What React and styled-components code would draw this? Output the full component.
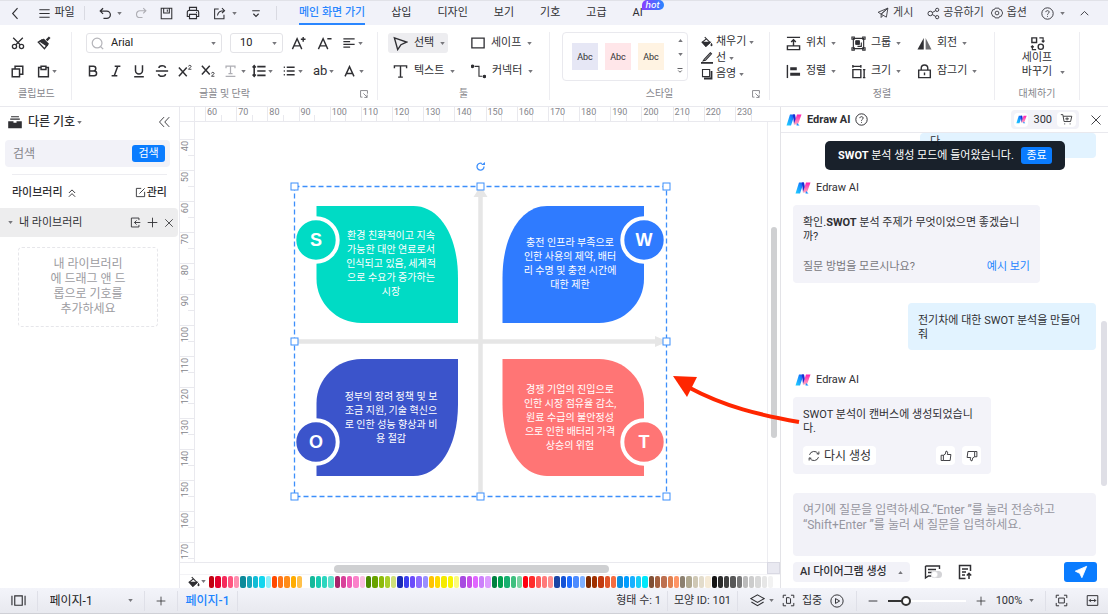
import { useState } from "react";
import styled, { createGlobalStyle, css } from "styled-components";

const GlobalStyle = createGlobalStyle`
  * {
    box-sizing: border-box;
  }

  body {
    margin: 0;
    background: #fff;
    color: #2f2f33;
    font-family: Roboto, "Noto Sans CJK KR", sans-serif;
    font-size: 11px;
    line-height: 14px;
    overflow: hidden;
  }

  button, input, select, textarea {
    font: inherit;
    color: inherit;
    margin: 0;
    padding: 0;
    border: 0;
    background: none;
  }

  button {
    cursor: pointer;
  }

  a {
    text-decoration: none;
  }

  svg {
    display: block;
    flex: none;
  }
`;

/* ---------- icons ---------- */

const icons = {
  back: <path d="M10.5 1.5 4.500 8l6 6.500" />,
  menu: <path d="M.500 2.500h15M.500 8h15M.500 13.500h15" />,
  undo: <path d="M5 1.500 1.500 5l3.500 3.500M1.500 5h8a4.500 4.500 0 0 1 0 9H5.500" />,
  redo: <path d="M11 1.500l3.500 3.500-3.500 3.500M14.500 5h-8a4.500 4.500 0 0 0 0 9H10" />,
  save: <path d="M1.500 1.500h13v13h-13zM4.500 1.500v6h7v-6M9 3.200v2.500" />,
  print: (
    <>
      <path d="M4 5V1.500h8V5M4 12H1.500V7a2 2 0 0 1 2-2h9a2 2 0 0 1 2 2v5H12" />
      <path d="M4 9.500h8v5H4zM11.500 7.300h1" />
    </>
  ),
  export: <path d="M7 2.500H2v12h11.500V9.500M5.500 10.500C6 6.500 9 4.500 13.500 4.500M11 1.500l3.200 3L11 7.500" />,
  more: <path d="M3 5h10M4.500 9 8 12.500 11.500 9" />,
  plane: <path d="M14.500 1.500 1.500 7l4 2.500zM14.500 1.500l-2 12-7-4zM5.500 9.500V14l2.500-2.800" />,
  share: (
    <>
      <circle cx="4" cy="8" r="2.800" />
      <circle cx="12.500" cy="3.500" r="2" />
      <circle cx="12.500" cy="12.500" r="2" />
      <path d="m6.500 6.800 4.200-2.300M6.500 9.300l4.200 2.300" />
    </>
  ),
  gear: (
    <>
      <path d="M5.500 1.500h5l1 2 2.200.2L15.500 8l-1.800 4.300-2.200.2-1 2h-5l-1-2-2.200-.2L.500 8l1.800-4.300 2.200-.2z" />
      <circle cx="8" cy="8" r="2.500" />
    </>
  ),
  help: (
    <>
      <circle cx="8" cy="8" r="7" />
      <path d="M6 6.300C6 3.800 10 3.900 10 6.300 10 7.800 8 7.800 8 9.500M8 11v1" />
    </>
  ),
  up: <path d="m2.500 10.500 5.500-5.500 5.500 5.500" />,
  cut: (
    <>
      <circle cx="4" cy="12" r="2.400" />
      <circle cx="12" cy="12" r="2.400" />
      <path d="M2.500 2 10.500 10M13.500 2l-8 8" />
    </>
  ),
  brush: (
    <>
      <path d="M14.500 1.500 11 5" strokeWidth="2.600" />
      <path d="m7 3.500 6 6" strokeWidth="2" />
      <path d="M6 4.500 1.500 7l7 7.500 3.500-4.500z" />
      <path d="m6 4.500 6 5.500-1 1-7.500-5z" fill="currentColor" />
    </>
  ),
  copy: <path d="M1.500 5h9v9.500h-9zM5 4.500v-3h9.500v10H11" />,
  paste: <path d="M5 3H2v11.500h12V3h-3M5 1.500h6v4H5z" />,
  search: (
    <>
      <circle cx="7.500" cy="7.500" r="6" />
      <path d="m12 12 3 3" />
    </>
  ),
  fontUp: <path d="M1.500 14 6.500 3l5 11M3.500 10.500h6M13 1v5M10.500 3.500h5" />,
  fontDown: <path d="M1.500 14 6.500 3l5 11M3.500 10.500h6M11 3h4.500" />,
  align: <path d="M.500 2.500h15M.500 6.200h9M.500 9.800h15M.500 13.500h9" />,
  bold: <path d="M4 2.500h4.500a2.700 2.700 0 0 1 0 5.400H4zM4 7.900h5.300a2.800 2.800 0 0 1 0 5.600H4z" />,
  italic: <path d="M6.500 2.500H13M3 13.500h6.500M10 2.500l-4 11" />,
  underline: <path d="M4 1.500v6a4 4 0 0 0 8 0v-6M2.500 14.500h11" />,
  strike: <path d="M12 4.500C11.500 1.300 4.500 1.300 4.500 4.700M1 8h14M4 11.500c.5 3.400 8 3.300 8-.2" />,
  sup: (
    <>
      <path d="m1 4 9 10M10 4 1 14" />
      <path d="M12 2.800c0-1.700 3-1.700 3 0 0 1-3 2.200-3 3.200h3.300" strokeWidth="1" />
    </>
  ),
  sub: (
    <>
      <path d="m1 2 9 10M10 2 1 12" />
      <path d="M12 10.800c0-1.700 3-1.700 3 0 0 1-3 2.200-3 3.200h3.300" strokeWidth="1" />
    </>
  ),
  textFx: <path d="M2.500 4V1.500h11V4M8 1.500v9M5.500 10.500h5M2 14h12" />,
  lineHeight: <path d="M6 3h9.500M6 8h9.500M6 13h9.500M2.500 2v12M.700 4l1.800-2 1.800 2M.700 12l1.800 2 1.800-2" />,
  list: <path d="M5 3h10.500M5 8h10.500M5 13h10.500M1 3h1.500M1 8h1.500M1 13h1.500" />,
  fontColor: <path d="M2.500 14 8 2l5.500 12M4.300 10.500h7.400" />,
  launcher: <path d="M5.500 13H2.500V2.500h11v5M7 7l6 6M13 9v4.500H8.500" />,
  cursor: <path d="M1.500 2 14.500 6.500 8.500 9.300 5 14.500z" />,
  rect: <path d="M1 2.500h14v11H1z" />,
  text: <path d="M1.500 4.500V2h13v2.500M8 2v12M5.500 14h5" />,
  connector: (
    <>
      <path d="M4 2.500h4.500v10.500H12" strokeWidth="1.200" />
      <circle cx="1.700" cy="2.500" r="1.200" fill="currentColor" />
      <circle cx="14.300" cy="13.300" r="1.200" fill="currentColor" />
    </>
  ),
  fill: (
    <>
      <path d="M5 1.500 12 8.500 6.500 13.500 1.500 8.500 7.500 3.500" />
      <path d="M2.500 8.500H12l-5.500 5z" fill="currentColor" />
      <path d="M14 10.500c-2 3 2 3 0 0z" fill="currentColor" />
    </>
  ),
  pen: (
    <>
      <path d="M4.500 9.500 12.500 1l1.500 1.500-8 8.500-3 .8z" />
      <path d="M0 14.500h16" strokeWidth="2.400" />
    </>
  ),
  shadow: (
    <>
      <path d="M2 2h9.500v9.500H2z" />
      <path d="M4 14h10V4" strokeWidth="2.400" />
    </>
  ),
  position: <path d="M1 1.500h14M8 10V4.500M5.500 6.500 8 4l2.500 2.500M1.500 10.500h13v4h-13z" />,
  group: (
    <>
      <path d="M2.500 2.500h11v11h-11z" strokeWidth="1.200" />
      <path d="M1 1h2.500v2.500H1zM12.500 1H15v2.500h-2.500zM1 12.500h2.500V15H1zM12.500 12.500H15V15h-2.500z" strokeWidth="1.200" />
      <path d="M5 5h4v4H5z" fill="currentColor" strokeWidth="1" />
      <path d="M10.500 7.500H11v3.500H7.500v-.5" strokeWidth="1.200" />
    </>
  ),
  flip: (
    <>
      <path d="M7.200 2v12.500H.500z" fill="currentColor" />
      <path d="M9.200 2v12.500H15.500z" opacity=".7" fill="currentColor" />
    </>
  ),
  alignLeft: (
    <>
      <path d="M1.500 1v14" />
      <path d="M4.500 5h7M4.500 11h10.500" strokeWidth="3.200" />
    </>
  ),
  size: <path d="M2 6h8.500v8.500H2zM2 2.500h8.500M2 1v3M10.500 1v3M14 6v8.500M12.700 6h2.600M12.700 14.500h2.600" />,
  lock: <path d="M1.800 6.500h12.400v8H1.800zM4.500 6.500v-2a3.500 3.500 0 0 1 7 0v2M8 9v3" />,
  replace: (
    <>
      <path d="M2 2h5v5H2z" />
      <circle cx="11.500" cy="11.500" r="2.800" />
      <path d="M10 2h4v4M12.500 5 14 6.500 15.500 5M6.500 14.500h-4v-4M1 12l1.500-1.500L4 12" strokeWidth="1.200" />
    </>
  ),
  drawer: (
    <>
      <path d="M3.500 2h9M2.500 4.700h11" strokeWidth="1.200" />
      <path d="M1 8h4.500v1.500h5V8H15v6.500H1z" fill="currentColor" />
    </>
  ),
  collapse: <path d="M8 1.500 2 8l6 6.500M15 1.500 9 8l6 6.500" />,
  doubleUp: <path d="M3 8l5-5 5 5M3 14l5-5 5 5" />,
  edit: <path d="M9 2H2v12h12V7M6.500 9.500 14 2" />,
  importBox: <path d="M13 4.500v-3H2v13h11v-3M15 8H6.500M9.500 5l-3 3 3 3" />,
  plus: <path d="M8 1v14M1 8h14" />,
  minus: <path d="M1 8h14" />,
  close: <path d="m2 2 12 12M14 2 2 14" />,
  cart: (
    <>
      <path d="M1 2h2.500l1.500 8.500h8L14.500 4H4M6.500 7.200h4.500M8.700 5.300v3.800" />
      <path d="M5.500 13.500h.800M12 13.500h.800" strokeWidth="1.600" />
    </>
  ),
  refresh: <path d="M2 6.500A6.300 6.300 0 0 1 13.500 5M14 9.500A6.300 6.300 0 0 1 2.500 11M1.500 14v-3.500l3 .5M14.500 2v3.500l-3-.5" />,
  thumb: <path d="M1.500 7h3v7h-3zM4.500 7 7 5.500 8 1.500c2.500 0 2.500 2 1.800 4.500h4.700l-1 8h-9" />,
  thumbDown: <path d="M14.500 9h-3V2h3zM11.500 9 9 10.500 8 14.500c-2.500 0-2.500-2-1.800-4.500H1.500l1-8h9" />,
  docUp: <path d="M13.500 7V1.500h-11v13h6M5 5h6M5 8h4M5 11h3M12 15V9.500M9.800 11.500 12 9.300l2.200 2.200" />,
  send: <path d="M14.500 1.500 1.500 7l5 2.500 2.500 5z" fill="currentColor" />,
  pages: <path d="M4 3h8v10H4zM1 3v10M15 3v10" />,
  layers: <path d="M8 2 15 6 8 10 1 6zM1.500 9.500 8 13.500l6.500-4" />,
  focus: <path d="M1.500 5V1.500H5M11 1.500h3.500V5M14.500 11v3.500H11M5 14.500H1.500V11M5.500 4.500h3.500l1.500 1.500v5.500h-5z" />,
  play: (
    <>
      <circle cx="8" cy="8" r="7" />
      <path d="M6.300 5.200v5.600L11 8z" />
    </>
  ),
  fit: <path d="M1.500 5V1.500H5M11 1.500h3.500V5M14.500 11v3.500H11M5 14.500H1.500V11M4.500 5h7v6h-7z" />,
  fitWidth: <path d="M1.500 2h13v12h-13zM4 8h8M6 6 4 8l2 2M10 6l2 2-2 2" />,
};

const Icon = ({ name, size = 14, stroke = 1.5 }) => (
  <svg
    width={size}
    height={size}
    viewBox="0 0 16 16"
    fill="none"
    stroke="currentColor"
    strokeWidth={stroke}
    aria-hidden="true"
  >
    {icons[name]}
  </svg>
);

const CaretSvg = styled.svg`
  color: #77777c;
`;

const Caret = ({ up }) => (
  <CaretSvg width="5" height="3" viewBox="0 0 6 4">
    <path d={up ? "M0 4h6L3 0z" : "M0 0h6L3 4z"} fill="currentColor" />
  </CaretSvg>
);

const Logo = ({ size = 16 }) => (
  <svg width={size} height={size} viewBox="0 0 16 16">
    <defs>
      <linearGradient id="logoBlue" x1="0" y1="1" x2="1" y2="0">
        <stop offset="0" stopColor="#24d3ff" />
        <stop offset=".6" stopColor="#1590ff" />
        <stop offset="1" stopColor="#1a3be8" />
      </linearGradient>
      <linearGradient id="logoPink" x1="0" y1="0" x2="0" y2="1">
        <stop offset="0" stopColor="#ff1fae" />
        <stop offset="1" stopColor="#ffa9c0" />
      </linearGradient>
    </defs>
    <path d="M4 2.500h4.800L5 13.500H.500z" fill="url(#logoBlue)" />
    <path d="M7 2.500h2L10.500 10 8 12.500z" fill="#1a2bd0" />
    <path d="M11 2.500h4.500L12 12.500H7.800z" fill="url(#logoPink)" />
    <path d="m11 11 2.500 2.500h-3z" fill="#1590ff" />
  </svg>
);

/* ---------- frame ---------- */

const Page = styled.div`
  display: flex;
  flex-direction: column;
  height: 100vh;
`;

const Row = styled.div`
  display: flex;
  align-items: center;
  gap: ${(p) => p.$gap || 0}px;
`;

const ToolButton = styled.button`
  display: inline-flex;
  align-items: center;
  justify-content: ${(p) => (p.$center ? "center" : "flex-start")};
  gap: ${(p) => p.$gap || 0}px;
  height: ${(p) => p.$height || 20}px;
  ${(p) => p.$width && css`width: ${p.$width}px;`}
  color: ${(p) => (p.$muted ? "#aeaeb4" : "inherit")};
  white-space: nowrap;
`;

const VLine = styled.i`
  width: 1px;
  height: 14px;
  background: #d9dae2;
`;

/* ---------- top bar ---------- */

const TopBar = styled.header`
  display: flex;
  align-items: center;
  height: 25px;
  background: #f1f2f9;
  border-top: 1px solid #e1e2e8;
`;

const Quick = styled(Row)`
  padding: 0 14px;
  gap: 13px;
`;

const Tabs = styled.nav`
  display: flex;
  gap: 26px;
  margin-left: 22px;
  height: 24px;
`;

const Tab = styled.a`
  position: relative;
  color: ${(p) => (p.$active ? "#2a86ff" : "#2f2f33")};
  font-weight: ${(p) => (p.$active ? 500 : 400)};
  line-height: 23px;
  height: 24px;
  border-bottom: 2px solid ${(p) => (p.$active ? "#2a86ff" : "transparent")};
`;

const HotBadge = styled.span`
  position: absolute;
  left: 9px;
  top: -1px;
  padding: 0 4px;
  border-radius: 5px 5px 5px 0;
  background: linear-gradient(90deg, #8a3dff, #2a86ff);
  color: #fff;
  font: italic 500 9px/10px Inter, sans-serif;
`;

const TopRight = styled(Row)`
  margin-left: auto;
  padding-right: 18px;
  gap: 14px;
  color: #3c3c42;
`;

const TopBarView = () => (
  <TopBar>
    <ToolButton $center $width={30} aria-label="뒤로">
      <Icon name="back" size={13} stroke={1.4} />
    </ToolButton>
    <ToolButton $center $gap={4} $width={54}>
      <Icon name="menu" size={11} /> 파일
    </ToolButton>
    <VLine />
    <Quick>
      <ToolButton aria-label="실행 취소" $gap={5}>
        <Icon name="undo" size={13} />
        <Caret />
      </ToolButton>
      <ToolButton $muted aria-label="다시 실행"><Icon name="redo" size={12} /></ToolButton>
      <ToolButton aria-label="저장"><Icon name="save" size={13} stroke={1.3} /></ToolButton>
      <ToolButton aria-label="인쇄"><Icon name="print" size={14} stroke={1.3} /></ToolButton>
      <ToolButton aria-label="내보내기" $gap={6}>
        <Icon name="export" size={13} stroke={1.3} />
        <Caret />
      </ToolButton>
      <ToolButton aria-label="더 보기"><Icon name="more" size={12} /></ToolButton>
    </Quick>
    <VLine />
    <Tabs>
      <Tab href="#home" $active>메인 화면 가기</Tab>
      <Tab href="#insert">삽입</Tab>
      <Tab href="#design">디자인</Tab>
      <Tab href="#view">보기</Tab>
      <Tab href="#symbol">기호</Tab>
      <Tab href="#advanced">고급</Tab>
      <Tab href="#ai">
        AI<HotBadge>hot</HotBadge>
      </Tab>
    </Tabs>
    <TopRight>
      <ToolButton $gap={4}><Icon name="plane" size={12} stroke={1.2} /> 게시</ToolButton>
      <Row $gap={7}>
        <ToolButton $gap={3}><Icon name="share" size={13} stroke={1.2} /> 공유하기</ToolButton>
        <ToolButton $gap={4}><Icon name="gear" size={12} stroke={1.2} /> 옵션</ToolButton>
      </Row>
      <ToolButton $gap={6} aria-label="도움말">
        <Icon name="help" size={13} stroke={1.2} />
        <Caret />
      </ToolButton>
      <ToolButton aria-label="리본 접기"><Icon name="up" size={11} stroke={1.4} /></ToolButton>
    </TopRight>
  </TopBar>
);

/* ---------- ribbon ---------- */

const Ribbon = styled.div`
  display: flex;
  height: 82px;
  padding: 7px 0 6px;
  border-bottom: 1px solid #e9e9ee;
`;

const Group = styled.section`
  display: flex;
  flex-direction: column;
  flex: none;
  width: ${(p) => p.$width}px;
  padding-left: ${(p) => p.$pad}px;
  border-right: 1px solid #ededf1;
`;

const Tools = styled.div`
  display: grid;
  grid-template-columns: ${(p) => p.$cols};
  grid-template-rows: 22px 22px;
  row-gap: 6px;
  align-items: center;
`;

const GroupFoot = styled.div`
  display: grid;
  grid-template-columns: 18px 1fr 18px;
  align-items: center;
  margin: auto 0 0 -${(p) => p.$pad}px;
  color: #85858b;
  font-size: 10px;
  line-height: 12px;
  text-align: center;
  white-space: nowrap;
`;

const FootLabel = styled.span`
  grid-column: 2;
`;

const Field = styled.label`
  display: flex;
  align-items: center;
  width: ${(p) => p.$width}px;
  height: 20px;
  padding: 0 5px 0 ${(p) => p.$pad}px;
  gap: 7px;
  border: 1px solid #e3e3e7;
  border-radius: 3px;
  color: #b5b5ba;
`;

const Select = styled.select`
  flex: 1;
  min-width: 0;
  appearance: none;
  outline: none;
  color: #222;
`;

const SelectButton = styled(ToolButton)`
  background: ${(p) => (p.$active ? "#ededf0" : "none")};
  border-radius: 3px;
  padding-left: 5px;
`;

const Gallery = styled.div`
  display: flex;
  gap: 7px;
  width: 126px;
  height: 49px;
  padding: 4px 3px 4px 9px;
  border: 1px solid #e9e9ee;
  border-radius: 4px;
  align-items: center;
`;

const Swatch = styled.button`
  width: 26px;
  height: 27px;
  background: ${(p) => p.$color};
  font-size: 9px;
  text-align: center;
`;

const GalleryArrows = styled.div`
  display: flex;
  flex-direction: column;
  align-items: center;
  justify-content: space-between;
  align-self: stretch;
  margin-left: auto;
  padding: 2px 0;
`;

const StyleRow = styled.div`
  display: flex;
  gap: 13px;
`;

const StyleList = styled.div`
  display: flex;
  flex-direction: column;
  padding-top: 2px;
`;

const Replace = styled.button`
  display: flex;
  flex-direction: column;
  align-items: center;
  height: 50px;
  padding-top: 4px;
`;

const Foot = ({ label, pad, launcher }) => (
  <GroupFoot $pad={pad}>
    <FootLabel>{label}</FootLabel>
    {launcher && <Icon name="launcher" size={10} />}
  </GroupFoot>
);

const LetterTool = styled(ToolButton)`
  font-size: 13px;
`;

const formatTools = [
  ["bold", "굵게"],
  ["italic", "기울임"],
  ["underline", "밑줄"],
  ["strike", "취소선"],
  ["sup", "위 첨자"],
  ["sub", "아래 첨자"],
];

const RibbonView = () => (
  <Ribbon>
    <Group $width={72} $pad={11}>
      <Tools $cols="26px 30px">
        <ToolButton aria-label="잘라내기"><Icon name="cut" /></ToolButton>
        <ToolButton aria-label="서식 복사"><Icon name="brush" /></ToolButton>
        <ToolButton aria-label="복사"><Icon name="copy" size={13} stroke={1.8} /></ToolButton>
        <ToolButton aria-label="붙여넣기" $gap={2}>
          <Icon name="paste" size={13} stroke={1.8} />
          <Caret />
        </ToolButton>
      </Tools>
      <Foot label="클립보드" pad={11} />
    </Group>

    <Group $width={306} $pad={14}>
      <Tools $cols="1fr">
        <Row $gap={8}>
          <Field $width={136} $pad={4}>
            <Icon name="search" size={13} />
            <Select aria-label="글꼴"><option>Arial</option></Select>
            <Caret />
          </Field>
          <Field $width={53} $pad={9}>
            <Select aria-label="글꼴 크기"><option>10</option></Select>
            <Caret />
          </Field>
          <ToolButton aria-label="글꼴 크게" $width={18}><Icon name="fontUp" size={15} /></ToolButton>
          <ToolButton aria-label="글꼴 작게" $width={18}><Icon name="fontDown" size={15} /></ToolButton>
          <ToolButton aria-label="맞춤" $gap={3}><Icon name="align" size={12} stroke={1.8} /><Caret /></ToolButton>
        </Row>
        <Row>
          {formatTools.map(([name, label]) => (
            <ToolButton key={name} $width={23} aria-label={label}>
              <Icon name={name} size={14} stroke={1.7} />
            </ToolButton>
          ))}
          <ToolButton $muted $width={28} $gap={4} aria-label="텍스트 효과"><Icon name="textFx" size={13} /><Caret /></ToolButton>
          <ToolButton $width={31} $gap={2} aria-label="줄 간격"><Icon name="lineHeight" stroke={1.8} /><Caret /></ToolButton>
          <ToolButton $width={30} $gap={3} aria-label="목록"><Icon name="list" size={12} stroke={1.8} /><Caret /></ToolButton>
          <LetterTool $width={30} $gap={2} aria-label="대소문자">ab<Caret /></LetterTool>
          <ToolButton $gap={3} aria-label="글꼴 색"><Icon name="fontColor" size={13} stroke={1.8} /><Caret /></ToolButton>
        </Row>
      </Tools>
      <Foot label="글꼴 및 단락" pad={14} launcher />
    </Group>

    <Group $width={172} $pad={10}>
      <Tools $cols="78px 1fr">
        <SelectButton $active $gap={6} $width={60}><Icon name="cursor" size={15} /> 선택<Caret /></SelectButton>
        <SelectButton $gap={6}><Icon name="rect" /> 세이프<Caret /></SelectButton>
        <SelectButton $gap={6}><Icon name="text" size={15} /> 텍스트<Caret /></SelectButton>
        <SelectButton $gap={6}><Icon name="connector" size={15} /> 커넥터<Caret /></SelectButton>
      </Tools>
      <Foot label="툴" pad={10} />
    </Group>

    <Group $width={220} $pad={12}>
      <StyleRow>
        <Gallery>
          <Swatch $color="#e6e7f5">Abc</Swatch>
          <Swatch $color="#ffe6e9">Abc</Swatch>
          <Swatch $color="#fff3e2">Abc</Swatch>
          <GalleryArrows>
            <Caret up />
            <Caret />
            <Icon name="more" size={8} />
          </GalleryArrows>
        </Gallery>
        <StyleList>
          <ToolButton $height={16} $gap={3}><Icon name="fill" size={12} />채우기<Caret /></ToolButton>
          <ToolButton $height={16} $gap={3}><Icon name="pen" size={12} />선<Caret /></ToolButton>
          <ToolButton $height={16} $gap={3}><Icon name="shadow" size={12} />음영<Caret /></ToolButton>
        </StyleList>
      </StyleRow>
      <Foot label="스타일" pad={12} launcher />
    </Group>

    <Group $width={225} $pad={16}>
      <Tools $cols="65px 66px 1fr">
        <ToolButton $gap={5}><Icon name="position" size={15} />위치<Caret /></ToolButton>
        <ToolButton $gap={5}><Icon name="group" size={15} />그룹<Caret /></ToolButton>
        <ToolButton $gap={5}><Icon name="flip" size={15} stroke={0} />회전<Caret /></ToolButton>
        <ToolButton $gap={5}><Icon name="alignLeft" size={15} />정렬<Caret /></ToolButton>
        <ToolButton $gap={5}><Icon name="size" size={15} />크기<Caret /></ToolButton>
        <ToolButton $gap={5}><Icon name="lock" size={15} />잠그기<Caret /></ToolButton>
      </Tools>
      <Foot label="정렬" pad={16} />
    </Group>

    <Group $width={85} $pad={0}>
      <Replace>
        <Icon name="replace" size={15} />
        <span>세이프</span>
        <Row $gap={8}><CaretSpace />바꾸기<Caret /></Row>
      </Replace>
      <Foot label="대체하기" pad={0} />
    </Group>
  </Ribbon>
);

const CaretSpace = styled.i`
  width: 5px;
`;

/* ---------- left panel ---------- */

const Main = styled.main`
  display: flex;
  flex: 1;
  min-height: 0;
`;

const Library = styled.aside`
  flex: none;
  width: 180px;
  border-right: 1px solid #e9e9ee;
`;

const LibraryHead = styled.div`
  display: flex;
  align-items: center;
  justify-content: space-between;
  height: 30px;
  padding: 0 9px 0 8px;
  font-size: 12px;
  font-weight: 500;
`;

const HeadTitle = styled.span`
  margin-left: 4px;
`;

const SearchBox = styled.form`
  display: flex;
  align-items: center;
  margin: 3px 9px 7px 5px;
  height: 27px;
  padding: 0 5px 0 8px;
  border-radius: 4px;
  background: #f2f2f8;
  font-size: 12px;

  input {
    flex: 1;
    min-width: 0;
    outline: none;
  }

  input::placeholder {
    color: #85858b;
  }
`;

const BlueButton = styled.button`
  width: ${(p) => p.$width || 33}px;
  height: ${(p) => p.$height || 17}px;
  border-radius: 3px;
  background: #0a7cff;
  color: #fff;
  font-size: 11px;
  display: flex;
  align-items: center;
  justify-content: center;
`;

const LibraryTitle = styled.div`
  display: flex;
  align-items: center;
  justify-content: space-between;
  margin: 0 12px;
  height: 34px;
  padding-top: 2px;
  border-top: 1px solid #ededf1;
  font-weight: 500;
`;

const LibraryItem = styled.div`
  display: flex;
  align-items: center;
  height: 29px;
  margin-right: 1px;
  padding: 0 4px 0 8px;
  gap: 6px;
  border-radius: 0 4px 4px 0;
  background: #ededee;

  > :nth-child(2) {
    margin-right: auto;
  }
`;

const DropZone = styled.p`
  margin: 10px 21px 0 18px;
  padding: 9px 30px;
  border: 1px dashed #e6e6ea;
  border-radius: 4px;
  color: #9c9ca1;
  font-size: 12px;
  line-height: 15px;
  text-align: center;
  white-space: nowrap;
`;

const LibraryView = () => (
  <Library>
    <LibraryHead>
      <Row $gap={2}>
        <Icon name="drawer" />
        <HeadTitle>다른 기호</HeadTitle>
        <Caret />
      </Row>
      <ToolButton aria-label="패널 접기"><Icon name="collapse" size={12} stroke={1.2} /></ToolButton>
    </LibraryHead>
    <SearchBox onSubmit={(e) => e.preventDefault()}>
      <input aria-label="기호 검색" placeholder="검색" />
      <BlueButton>검색</BlueButton>
    </SearchBox>
    <LibraryTitle>
      <Row $gap={4}>
        라이브러리 <Icon name="doubleUp" size={10} />
      </Row>
      <ToolButton $gap={1}><Icon name="edit" size={11} stroke={1.3} />관리</ToolButton>
    </LibraryTitle>
    <LibraryItem>
      <Caret />
      <span>내 라이브러리</span>
      <ToolButton aria-label="가져오기"><Icon name="importBox" size={11} stroke={1.3} /></ToolButton>
      <ToolButton aria-label="추가"><Icon name="plus" size={11} stroke={1.3} /></ToolButton>
      <ToolButton aria-label="닫기"><Icon name="close" size={10} stroke={1.3} /></ToolButton>
    </LibraryItem>
    <DropZone>
      내 라이브러리
      <br />에 드래그 앤 드
      <br />롭으로 기호를
      <br />추가하세요
    </DropZone>
  </Library>
);

/* ---------- canvas ---------- */

const CanvasArea = styled.section`
  position: relative;
  display: grid;
  grid-template-columns: 15px 1fr 13px;
  grid-template-rows: 15px 1fr 12px 14px;
  flex: 1;
  min-width: 0;
`;

const RulerTop = styled.div`
  display: flex;
  grid-column: 2 / 4;
  padding: 0 14px 0 10px;
  overflow: hidden;
  border-bottom: 1px solid #e9e9ee;
  color: #85858b;
  font-size: 9px;
  line-height: 11px;
`;

const TickX = styled.span`
  flex: 1 0 0;
  min-width: 0;
  padding-left: 1px;
  border-left: 1px solid #e9e9ee;
  background: linear-gradient(#e9e9ee, #e9e9ee) 50% 100% / 1px 6px no-repeat;
`;

const RulerLeft = styled.div`
  grid-row: 2;
  min-height: 0;
  padding-top: 17px;
  overflow: hidden;
  border-right: 1px solid #e9e9ee;
  color: #85858b;
  font-size: 9px;
  line-height: 10px;
`;

const TickY = styled.span`
  display: flex;
  height: 31px;
  padding-top: 1px;
  border-top: 1px solid #e9e9ee;
  background: linear-gradient(#e9e9ee, #e9e9ee) 100% 50% / 6px 1px no-repeat;

  b {
    align-self: flex-start;
    writing-mode: vertical-rl;
    transform: rotate(180deg);
    font-weight: 400;
  }
`;

const Corner = styled.i`
  border-right: 1px solid #e9e9ee;
  border-bottom: 1px solid #e9e9ee;
`;

const Stage = styled.div`
  position: relative;
  grid-column: 2;
  grid-row: 2;
  min-height: 0;
  overflow: hidden;
`;

const ScrollY = styled.div`
  grid-column: 3;
  grid-row: 2;
  padding: 105px 3px 0;
  border-left: 1px solid #ededf1;

  i {
    display: block;
    height: 211px;
    border-radius: 4px;
    background: #cfd0d2;
  }
`;

const ScrollX = styled.div`
  grid-column: 1 / 3;
  grid-row: 3;
  padding: 2px 0 2px 154px;
  border-top: 1px solid #e9e9ee;

  i {
    display: block;
    width: 275px;
    height: 8px;
    border-radius: 4px;
    background: #cfd0d2;
  }
`;

const ScrollCorner = styled.i`
  grid-column: 3;
  grid-row: 3;
  border: 1px solid #d9d9e3;
  background: #e9e9f1;
`;

const Palette = styled.div`
  display: flex;
  align-items: center;
  grid-column: 1 / 4;
  grid-row: 4;
  padding-left: 8px;
  border-top: 1px solid #f3f3f6;
`;

const PaletteColor = styled.i`
  flex: 1;
  height: 12px;
  margin-right: 1px;
  border-radius: 2px;
  background: ${(p) => p.$color};
`;

const Diagram = styled.div`
  position: absolute;
  left: 95px;
  top: 39px;
`;

const NodeText = styled.p`
  position: absolute;
  left: ${(p) => p.$x}px;
  top: ${(p) => p.$y}px;
  width: 110px;
  margin: 0;
  transform: translate(-50%, -50%);
  color: #fff;
  font-size: 10px;
  line-height: 14px;
  text-align: center;
  white-space: pre-line;
`;

const NodeLetter = styled.b`
  position: absolute;
  left: ${(p) => p.$x}px;
  top: ${(p) => p.$y}px;
  transform: translate(-50%, -50%);
  color: #fff;
  font: bold 18px/20px "Liberation Sans", sans-serif;
`;

const RedArrow = styled.svg`
  position: absolute;
  z-index: 2;
  right: -20px;
  top: 265px;
  pointer-events: none;
`;

// the drawing has a 4px left and 25px top margin for handles
const nodes = [
  {
    letter: "S",
    color: "#00dbc5",
    place: "translate(26.500 45)",
    cx: 26,
    cy: 79,
    tx: 101,
    ty: 103,
    text: "환경 친화적이고 지속\n가능한 대안 연료로서\n인식되고 있음, 세계적\n으로 수요가 증가하는\n시장",
  },
  {
    letter: "W",
    color: "#2f7bff",
    place: "translate(354 45) scale(-1 1)",
    cx: 354,
    cy: 79,
    tx: 280,
    ty: 103,
    text: "충전 인프라 부족으로\n인한 사용의 제약, 배터\n리 수명 및 충전 시간에\n대한 제한",
  },
  {
    letter: "O",
    color: "#3b54cb",
    place: "translate(26.500 315) scale(1 -1)",
    cx: 26,
    cy: 281,
    tx: 101,
    ty: 257,
    text: "정부의 장려 정책 및 보\n조금 지원, 기술 혁신으\n로 인한 성능 향상과 비\n용 절감",
  },
  {
    letter: "T",
    color: "#ff7575",
    place: "translate(354 315) scale(-1 -1)",
    cx: 354,
    cy: 281,
    tx: 280,
    ty: 257,
    text: "경쟁 기업의 진입으로\n인한 시장 점유율 감소,\n원료 수급의 불안정성\n으로 인한 배터리 가격\n상승의 위험",
  },
];

const handles = [
  [4, 25],
  [190, 25],
  [376, 25],
  [4, 180],
  [376, 180],
  [4, 335],
  [190, 335],
  [376, 335],
];

const palette = (
  "#c00010 #e3002b #f52b5b #ff5580 #ff8fb0 #0c8a9a #17a5ba #12bcd6 #12d6ee #8cf0fb " +
  "#ff4a00 #ff7518 #ff8c1a #ffac00 #ffc04a #ffffff #15b89a #17cbb0 #2bd6bf #5ee0cc " +
  "#a8246c #d8409a #ef5ab6 #fb82ca #f9bfe0 #4b8a00 #69a300 #8dbb0a #a9cf2b #cfe07a " +
  "#1a2bb5 #3c3ff0 #6b4bfb #8f6dff #9a8fff #ffc400 #ffd900 #f5ea00 #f8f500 #fbfb7a " +
  "#a74be0 #c84de8 #e066ff #cc80fb #dd9bff #008040 #00a04d #17b070 #3fc080 #7ad3a2 " +
  "#ff0010 #ff2b2b #ff5c5c #ff7a7a #ff8f8f #1a45a5 #1453d6 #1e6dff #4d8cff #7fb0ff " +
  "#7e2a00 #a03000 #c23a10 #e0552a #f56d40 #0a90e0 #009dff #17b0ff #17cdf8 #00e8fb " +
  "#804f35 #a3603f #bd7050 #e08050 #ff9566 #8c8070 #b0a890 #cfc8b5 #e3dccb #f5ead6 " +
  "#141414 #2b2b2b #404040 #585858 #777777 #bbbbbb #cccccc #d8d8d8 #e6e6e6 #f2f2f2 #ffffff"
).split(" ");

const range = (from, count) => Array.from({ length: count }, (_, i) => from + i * 10);

const CanvasView = () => (
  <CanvasArea>
    <Corner />
    <RulerTop>
      {range(60, 18).map((n) => (
        <TickX key={n}>{n}</TickX>
      ))}
    </RulerTop>
    <RulerLeft>
      {range(40, 14).map((n) => (
        <TickY key={n}>
          <b>{n}</b>
        </TickY>
      ))}
    </RulerLeft>
    <Stage>
      <Diagram>
        <svg width="382" height="342" viewBox="0 0 382 342">
          <path d="M190.500 34v301M4 180.500h364" stroke="#e6e6e6" strokeWidth="4.500" />
          <path d="m190.500 25 7 11h-14zM378 180.500l-13-5.500v11z" fill="#e6e6e6" />
          {nodes.map((n) => (
            <g key={n.letter} fill={n.color}>
              <path
                transform={n.place}
                d="M0 0h97c25 0 44.500 28 44.500 72v45H45C20 117 0 97 0 73z"
              />
              <circle cx={n.cx} cy={n.cy} r="21.700" stroke="#fff" strokeWidth="4" />
            </g>
          ))}
          <g stroke="#3d8ffb" fill="none">
            <path d="M4.500 25.500h372v310h-372z" strokeDasharray="5 3" strokeWidth="1.300" />
            {handles.map(([x, y]) => (
              <rect key={`${x}-${y}`} x={x - 3} y={y - 3} width="7" height="7" fill="#fff" />
            ))}
            <path d="M192 2.500a3.500 3.500 0 1 0 2 3" strokeWidth="1.300" />
            <path d="M191 4h4V1z" fill="#3d8ffb" stroke="none" />
          </g>
        </svg>
        {nodes.map((n) => (
          <NodeLetter key={n.letter} $x={n.cx} $y={n.cy}>{n.letter}</NodeLetter>
        ))}
        {nodes.map((n) => (
          <NodeText key={n.letter} $x={n.tx} $y={n.ty}>{n.text}</NodeText>
        ))}
      </Diagram>
    </Stage>
    <ScrollY><i /></ScrollY>
    <ScrollX><i /></ScrollX>
    <ScrollCorner />
    <Palette>
      <ToolButton $height={12} $gap={1} $width={21} aria-label="채우기 색">
        <Icon name="fill" size={12} />
        <Caret />
      </ToolButton>
      {palette.map((color, i) => (
        <PaletteColor key={i} $color={color} />
      ))}
    </Palette>
    <RedArrow width="130" height="56" viewBox="0 0 130 56">
      <path d="M129 50C90 43 55 35 18 15" fill="none" stroke="#ff2600" strokeWidth="4" />
      <path d="M3 4 27 5 17 25z" fill="#ff2600" />
    </RedArrow>
  </CanvasArea>
);

/* ---------- chat ---------- */

const Chat = styled.aside`
  position: relative;
  display: flex;
  flex-direction: column;
  flex: none;
  width: 328px;
  border-left: 1px solid #e3e3e7;
`;

const ChatHead = styled.div`
  display: flex;
  align-items: center;
  height: 26px;
  padding: 0 6px 0 5px;
  gap: 5px;
  border-bottom: 1px solid #e9e9ee;
`;

const Credits = styled.div`
  display: flex;
  align-items: center;
  gap: 5px;
  height: 19px;
  margin: 0 6px 0 auto;
  padding: 0 3px;
  border-radius: 4px;
  background: #f2f2f8;
  font-size: 11px;
`;

const WhiteButton = styled.button`
  display: flex;
  align-items: center;
  justify-content: center;
  gap: 4px;
  min-width: ${(p) => p.$width || 19}px;
  height: ${(p) => p.$height || 19}px;
  padding: 0 ${(p) => p.$pad || 0}px;
  border-radius: 4px;
  background: #fff;
  font-size: 12px;
`;

const Toast = styled.div`
  position: absolute;
  z-index: 1;
  top: 34px;
  left: 44px;
  display: flex;
  align-items: center;
  justify-content: space-between;
  width: 240px;
  height: 29px;
  padding: 0 13px;
  border-radius: 5px;
  background: rgba(18, 26, 36, 0.97);
  color: #fff;
  white-space: nowrap;
`;

const Messages = styled.div`
  display: flex;
  flex: 1;
  min-height: 0;
  overflow: hidden;
`;

const MessageList = styled.div`
  display: flex;
  flex-direction: column;
  align-items: flex-start;
  flex: 1;
  padding: 0 5px 0 12px;
`;

const Bubble = styled.div`
  width: ${(p) => p.$width}px;
  padding: 11px 10px 9px;
  margin-bottom: 20px;
  border-radius: 4px;
  background: #f3f3f9;
`;

const UserBubble = styled(Bubble)`
  align-self: flex-end;
  height: ${(p) => p.$height}px;
  margin-bottom: 22px;
  background: #e2f3ff;
`;

const OldBubble = styled(UserBubble)`
  padding-top: 2px;
`;

const Sender = styled.div`
  display: flex;
  align-items: center;
  gap: 5px;
  height: 16px;
  margin: 0 0 9px 2px;
`;

const BubbleFoot = styled.div`
  display: flex;
  align-items: center;
  gap: 7px;
  margin-top: ${(p) => p.$top}px;
  color: #77777c;

  > :first-child {
    margin-right: auto;
  }

  a {
    color: #1c84ff;
  }
`;

const RegenerateFoot = styled(BubbleFoot)`
  color: #2f2f33;
`;

const ScrollThumb = styled.i`
  width: 6px;
  height: 165px;
  margin: 188px 1px 0 0;
  border-radius: 3px;
  background: #dfdfe6;
`;

const Prompt = styled.textarea`
  height: 63px;
  margin: 0 12px 6px 12px;
  padding: 10px;
  border-radius: 4px;
  background: #f2f2f8;
  font-size: 12px;
  line-height: 15px;
  resize: none;
  outline: none;

  &::placeholder {
    color: #9696a0;
  }
`;

const ChatTools = styled.div`
  display: flex;
  align-items: center;
  height: 26px;
  margin: 0 11px 0 12px;
  padding-bottom: 6px;
  gap: 14px;

  > :last-child {
    margin-left: auto;
  }
`;

const ModeButton = styled(ToolButton)`
  width: 117px;
  padding: 0 7px;
  border-radius: 4px;
  background: #f2f2f8;
  justify-content: space-between;
  font-weight: 500;
`;

const ToggleIcon = () => (
  <svg width="19" height="16" viewBox="0 0 19 16" fill="none">
    <path d="M1.500 2h14v3M1.500 2v12l3-2h3M4 5.500h8M4 8.500h4" stroke="#2f2f33" strokeWidth="1.400" />
    <rect x="7" y="7" width="11" height="7" rx="3.500" fill="#d3d3d6" />
    <circle cx="10.500" cy="10.500" r="3.200" fill="#fff" stroke="#d3d3d6" strokeWidth=".500" />
  </svg>
);

const Author = () => (
  <Sender>
    <Logo /> Edraw AI
  </Sender>
);

const ChatView = () => {
  const [mode, setMode] = useState(true);

  return (
    <Chat>
      <ChatHead>
        <Logo />
        <b>Edraw AI</b>
        <Icon name="help" size={13} stroke={1.2} />
        <Credits>
          <WhiteButton as="span" $width={14} $height={14}><Logo size={11} /></WhiteButton>
          300
          <WhiteButton $height={15} aria-label="구매"><Icon name="cart" size={13} stroke={1.1} /></WhiteButton>
        </Credits>
        <ToolButton aria-label="닫기"><Icon name="close" size={12} stroke={1.2} /></ToolButton>
      </ChatHead>
      {mode && (
        <Toast>
          <span><b>SWOT</b> 분석 생성 모드에 들어왔습니다.</span>
          <BlueButton $width={31} onClick={() => setMode(false)}>종료</BlueButton>
        </Toast>
      )}
      <Messages>
        <MessageList>
          <OldBubble $width={176} $height={26}>다.</OldBubble>
          <Author />
          <Bubble $width={247}>
            확인.<b>SWOT</b> 분석 주제가 무엇이었으면 좋겠습니
            <br />까?
            <BubbleFoot $top={16}>
              <span>질문 방법을 모르시나요?</span>
              <a href="#example">예시 보기</a>
            </BubbleFoot>
          </Bubble>
          <UserBubble $width={188} $height={47}>
            전기차에 대한 SWOT 분석을 만들어
            <br />줘
          </UserBubble>
          <Author />
          <Bubble $width={198}>
            SWOT 분석이 캔버스에 생성되었습니
            <br />다.
            <RegenerateFoot $top={10}>
              <WhiteButton $pad={5}><Icon name="refresh" size={12} stroke={1.2} />다시 생성</WhiteButton>
              <WhiteButton aria-label="좋아요"><Icon name="thumb" size={12} stroke={1.2} /></WhiteButton>
              <WhiteButton aria-label="싫어요"><Icon name="thumbDown" size={12} stroke={1.2} /></WhiteButton>
            </RegenerateFoot>
          </Bubble>
        </MessageList>
        <ScrollThumb />
      </Messages>
      <Prompt
        aria-label="질문 입력"
        placeholder={"여기에 질문을 입력하세요.“Enter ”를 눌러 전송하고\n“Shift+Enter ”를 눌러 새 질문을 입력하세요."}
      />
      <ChatTools>
        <ModeButton>AI 다이어그램 생성 <Caret up /></ModeButton>
        <ToolButton aria-label="대화 모드"><ToggleIcon /></ToolButton>
        <ToolButton aria-label="문서 업로드"><Icon name="docUp" size={16} /></ToolButton>
        <BlueButton $height={20} aria-label="보내기"><Icon name="send" stroke={1} /></BlueButton>
      </ChatTools>
    </Chat>
  );
};

/* ---------- status bar ---------- */

const Status = styled.footer`
  display: flex;
  align-items: center;
  justify-content: space-between;
  height: 26px;
  background: linear-gradient(#f3f4fa, #e8e9ef);
  border-bottom: 1px solid #cfd0d6;
`;

const Cell = styled.div`
  display: flex;
  align-items: center;
  justify-content: ${(p) => (p.$width ? "center" : "flex-start")};
  gap: ${(p) => p.$gap || 0}px;
  height: 20px;
  ${(p) => p.$width && css`width: ${p.$width}px;`}
  padding: 0 ${(p) => p.$pad || 0}px;
  border-right: 1px solid #dfe0e8;
  white-space: nowrap;
`;

const PageTab = styled.a`
  color: #1c84ff;
  font-size: 12px;
  font-weight: 500;
`;

const PageSelect = styled(Select)`
  width: 76px;
  flex: none;
  font-size: 12px;
`;

const Slider = styled.input`
  appearance: none;
  width: 78px;
  height: 11px;
  background: linear-gradient(90deg, #333 26%, #fff 26%) 50% 50% / 100% 2px no-repeat;

  &::-webkit-slider-thumb {
    appearance: none;
    width: 10px;
    height: 10px;
    border: 2px solid #333;
    border-radius: 50%;
    background: #fff;
  }
`;

const StatusView = () => {
  const [zoom, setZoom] = useState(20);

  return (
    <Status>
      <Row>
        <Cell $width={38}><Icon name="pages" size={15} stroke={1.2} /></Cell>
        <Cell $width={107} $gap={2}>
          <PageSelect aria-label="페이지"><option>페이지-1</option></PageSelect>
          <Caret />
        </Cell>
        <Cell $width={33}><ToolButton aria-label="페이지 추가"><Icon name="plus" size={10} stroke={1.3} /></ToolButton></Cell>
        <Cell $width={60}><PageTab href="#page-1">페이지-1</PageTab></Cell>
      </Row>
      <Row>
        <Cell $pad={6}>형태 수: 1</Cell>
        <Cell $pad={6}>모양 ID: 101</Cell>
        <Cell $width={119} $gap={8}>
          <ToolButton $gap={4} aria-label="레이어"><Icon name="layers" size={15} stroke={1.2} /><Caret /></ToolButton>
          <ToolButton $gap={7}><Icon name="focus" size={13} stroke={1.2} />집중</ToolButton>
          <ToolButton aria-label="재생"><Icon name="play" stroke={1.1} /></ToolButton>
        </Cell>
        <Cell $width={189} $gap={10}>
          <ToolButton aria-label="축소"><Icon name="minus" size={10} /></ToolButton>
          <Slider
            type="range"
            aria-label="확대/축소"
            value={zoom}
            onChange={(e) => setZoom(e.target.value)}
          />
          <ToolButton aria-label="확대"><Icon name="plus" size={10} stroke={1.3} /></ToolButton>
          <ToolButton $gap={7}>100%<Caret /></ToolButton>
        </Cell>
        <ToolButton $center $width={31} aria-label="화면 맞춤"><Icon name="fit" size={13} stroke={1.2} /></ToolButton>
        <ToolButton $center $width={31} aria-label="너비 맞춤"><Icon name="fitWidth" size={13} stroke={1.2} /></ToolButton>
      </Row>
    </Status>
  );
};

function App() {
  return (
    <Page>
      <GlobalStyle />
      <TopBarView />
      <RibbonView />
      <Main>
        <LibraryView />
        <CanvasView />
        <ChatView />
      </Main>
      <StatusView />
    </Page>
  );
}

export default App;
